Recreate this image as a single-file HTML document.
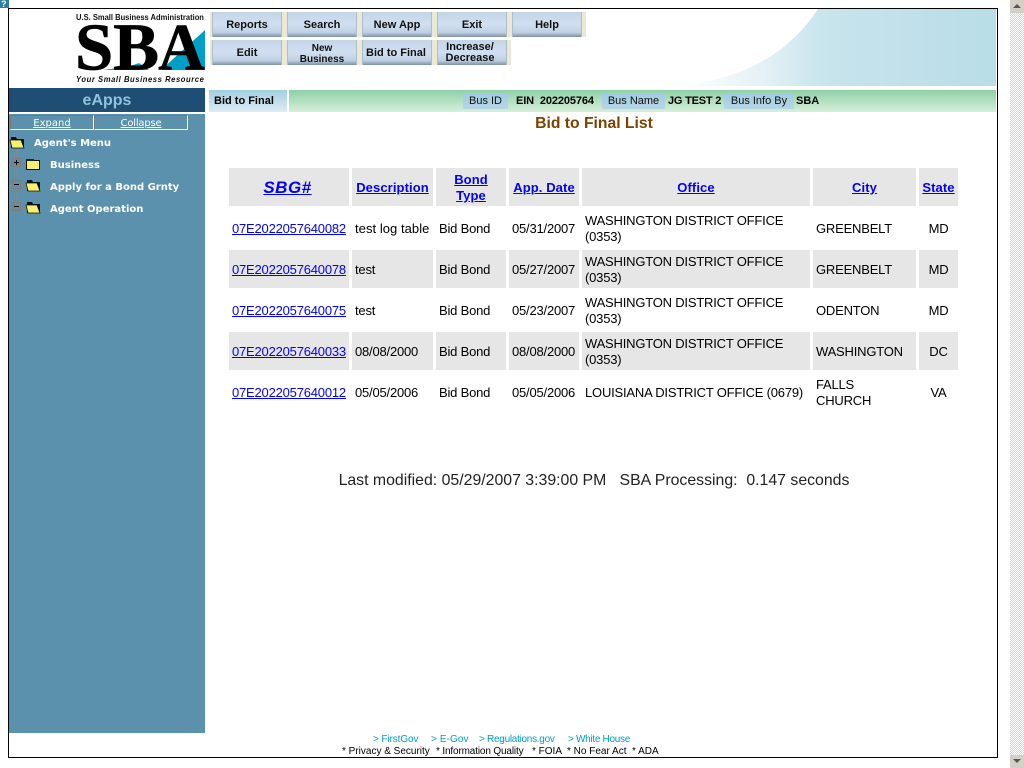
<!DOCTYPE html>
<html><head><meta charset="utf-8"><title>Bid to Final List</title>
<style>
html,body{margin:0;padding:0;width:1024px;height:768px;overflow:hidden;background:#fff;font-family:"Liberation Sans",sans-serif;color:#000}
.a{position:absolute;white-space:nowrap}
a{color:#00f;text-decoration:underline}
#frame{position:absolute;left:8px;top:8px;width:988px;height:748px;border:1px solid #000}
.btn{position:absolute;width:70px;height:25px;padding-top:1px;box-sizing:border-box;background:linear-gradient(#c4d5e8 0%,#d0dff0 50%,#c0d0e4 82%,#7d90a4 100%);box-shadow:inset 1px 0 0 #aebdcd,inset -1px 0 0 #aebdcd,4px 0 0 #ece8d2,-2px 0 0 #ece8d2;text-align:center;font:bold 11px/11px "Liberation Sans",sans-serif;color:#111;display:flex;align-items:center;justify-content:center}
.lb{position:absolute;top:93px;height:16px;background:linear-gradient(#9fcbe0,#b7d6e6);font:11px/17px "Liberation Sans",sans-serif;color:#111;text-align:center}
.val{position:absolute;top:93px;font:bold 11px/17px "Liberation Sans",sans-serif;color:#000;white-space:nowrap}
table{position:absolute;left:226px;top:165px;border-collapse:separate;border-spacing:3px;table-layout:fixed;width:735px;font:13px/16px "Liberation Sans",sans-serif;letter-spacing:-.2px}
td,th{padding:2px 3px 0;height:38px;box-sizing:border-box;overflow:hidden}
th{background:#e6e6e6;text-align:center;font:bold 13px/16px "Liberation Sans",sans-serif;letter-spacing:.1px}
tr.g td{background:#e6e6e6}
td.c{text-align:center}
.m{position:absolute;font:bold 10px/12px "DejaVu Sans",sans-serif;color:#fff;white-space:nowrap}
.foot{position:absolute;white-space:nowrap;font:10px/11px "Liberation Sans",sans-serif}
</style></head><body>
<svg class="a" style="left:0;top:0" width="9" height="8"><rect width="9" height="8" fill="#2c7f9f"/><text x="1" y="7" font-family="Liberation Sans" font-size="9" font-weight="bold" fill="#fff">?</text></svg>
<div id="frame"></div>

<!-- banner graphic -->
<svg class="a" style="left:660px;top:9px" width="337" height="80">
<defs><linearGradient id="bg" x1="0" x2="1" y1="0" y2="0"><stop offset="0" stop-color="#fff"/><stop offset=".28" stop-color="#e2f0f5"/><stop offset=".45" stop-color="#c8e4ed"/><stop offset="1" stop-color="#b9dde7"/></linearGradient></defs>
<path d="M20 77C90 68 130 42 158 0H336V77Z" fill="url(#bg)"/>
</svg>

<!-- logo -->
<div class="a" style="left:76px;top:12px;font:bold 8.5px/11px 'Liberation Sans',sans-serif;color:#111;transform:scaleX(.89);transform-origin:0 0">U.S. Small Business Administration</div>
<svg class="a" style="left:75px;top:24px" width="131" height="48">
<path d="M87 45L130 6V46H87Z" fill="#00a0c6"/>
<path d="M28 46C42 44 54 43 64 39L74 46Z" fill="#00a0c6"/>
<text x="0" y="45.500" font-family="Liberation Serif" font-weight="bold" font-size="67" textLength="84" lengthAdjust="spacingAndGlyphs" fill="#000" stroke="#000" stroke-width=".7">SB</text>
<text x="83" y="45.500" font-family="Liberation Serif" font-weight="bold" font-size="67" textLength="47" lengthAdjust="spacingAndGlyphs" fill="#000" stroke="#000" stroke-width=".4">A</text>
<path d="M97 46L103 40L109 46Z" fill="#00a0c6"/>
</svg>
<div class="a" style="left:76px;top:74px;font:italic bold 8.5px/11px 'Liberation Sans',sans-serif;letter-spacing:.62px;color:#111;transform:scaleX(.9);transform-origin:0 0">Your Small Business Resource</div>

<!-- buttons -->
<div class="btn" style="left:212px;top:12px">Reports</div>
<div class="btn" style="left:287px;top:12px">Search</div>
<div class="btn" style="left:362px;top:12px">New App</div>
<div class="btn" style="left:437px;top:12px">Exit</div>
<div class="btn" style="left:512px;top:12px">Help</div>
<div class="btn" style="left:212px;top:40px">Edit</div>
<div class="btn" style="left:287px;top:40px;font-size:10px;padding-top:3px">New<br>Business</div>
<div class="btn" style="left:362px;top:40px;padding-right:2px">Bid to Final</div>
<div class="btn" style="left:437px;top:40px;padding-right:4px">Increase/<br>Decrease</div>

<!-- sidebar -->
<div class="a" style="left:9px;top:88px;width:196px;height:24px;background:#1f4e74;color:#8fc3dc;font:bold 16px/25px 'Liberation Sans',sans-serif;text-align:center">eApps</div>
<div class="a" style="left:9px;top:112px;width:196px;height:621px;background:#5b91ad"></div>
<div class="a" style="left:9px;top:112px;width:196px;height:2px;background:#fff"></div>
<div class="a" style="left:10px;top:115px;width:82px;height:13px;border:1px solid;border-color:#777 #fff #fff #777;color:#fff;font:10px/15px 'DejaVu Sans',sans-serif;text-align:center;text-decoration:underline">Expand</div>
<div class="a" style="left:94px;top:115px;width:92px;height:13px;border:1px solid;border-color:#777 #fff #fff #777;color:#fff;font:10px/15px 'DejaVu Sans',sans-serif;text-align:center;text-decoration:underline;letter-spacing:-.2px">Collapse</div>

<svg class="a" style="left:0;top:130px" width="60" height="90">
<path d="M16.500 18V78M20 34.500H26M20 56.500H26M20 78.500H26" stroke="#7d8a92" fill="none" stroke-dasharray="1 1"/>
<g transform="translate(9,-1)"><path d="M2 8H7L8 10H15V19H2Z" fill="#111"/><path d="M1 11H12L15 19H3Z" fill="#f6f070" stroke="#111" stroke-width=".8"/></g>
<rect x="12.500" y="28.500" width="8" height="8" fill="#5b91ad" stroke="#7d7d7d"/><path d="M14 32.500H19M16.500 30V35" stroke="#000"/>
<rect x="12.500" y="50.500" width="8" height="8" fill="#5b91ad" stroke="#7d7d7d"/><path d="M14 54.500H19" stroke="#000"/>
<rect x="12.500" y="72.500" width="8" height="8" fill="#5b91ad" stroke="#7d7d7d"/><path d="M14 76.500H19" stroke="#000"/>
<path d="M26.500 30.500H39.500V39.500H26.500Z" fill="#f6f070" stroke="#111"/><path d="M26 29H34V31H26Z" fill="#222"/>
<g transform="translate(25,42)"><path d="M2 8H7L8 10H15V19H2Z" fill="#111"/><path d="M1 11H12L15 19H3Z" fill="#f6f070" stroke="#111" stroke-width=".8"/></g>
<g transform="translate(25,64)"><path d="M2 8H7L8 10H15V19H2Z" fill="#111"/><path d="M1 11H12L15 19H3Z" fill="#f6f070" stroke="#111" stroke-width=".8"/></g>
</svg>
<div class="m" style="left:34px;top:138px">Agent's Menu</div>
<div class="m" style="left:50px;top:160px">Business</div>
<div class="m" style="left:50px;top:182px">Apply for a Bond Grnty</div>
<div class="m" style="left:50px;top:204px">Agent Operation</div>

<!-- status bar -->
<div class="a" style="left:209px;top:90px;width:78px;height:22px;background:linear-gradient(#a3cfe2,#dcecf3);font:bold 11px/23px 'Liberation Sans',sans-serif;text-indent:5px">Bid to Final</div>
<div class="a" style="left:289px;top:90px;width:707px;height:22px;background:linear-gradient(#8ed0a6,#d6efdb)"></div>
<div class="lb" style="left:463px;width:45px">Bus ID</div>
<div class="val" style="left:516px;letter-spacing:-.12px">EIN&nbsp; 202205764</div>
<div class="lb" style="left:602px;width:63px">Bus Name</div>
<div class="val" style="left:668px;letter-spacing:-.2px">JG TEST 2</div>
<div class="lb" style="left:724px;width:70px">Bus Info By</div>
<div class="val" style="left:796px">SBA</div>

<div class="a" style="left:209px;width:770px;top:114px;text-align:center;font:bold 15.700px/19px 'Liberation Sans',sans-serif;color:#7a4300">Bid to Final List</div>

<table>
<colgroup><col style="width:120px"><col style="width:81px"><col style="width:70px"><col style="width:70px"><col style="width:228px"><col style="width:103px"><col style="width:39px"></colgroup>
<tr>
<th style="font:italic bold 17px/16px 'Liberation Sans',sans-serif;letter-spacing:.5px;padding-left:0"><a href="#">SBG#</a></th><th><a href="#">Description</a></th><th><a href="#">Bond<br>Type</a></th><th><a href="#">App. Date</a></th><th><a href="#">Office</a></th><th><a href="#">City</a></th><th><a href="#">State</a></th></tr>
<tr><td><a href="#">07E2022057640082</a></td><td style="letter-spacing:.05px;white-space:nowrap">test log table</td><td>Bid Bond</td><td>05/31/2007</td><td>WASHINGTON DISTRICT OFFICE (0353)</td><td>GREENBELT</td><td class="c">MD</td></tr>
<tr class="g"><td><a href="#">07E2022057640078</a></td><td>test</td><td>Bid Bond</td><td>05/27/2007</td><td>WASHINGTON DISTRICT OFFICE (0353)</td><td>GREENBELT</td><td class="c">MD</td></tr>
<tr><td><a href="#">07E2022057640075</a></td><td>test</td><td>Bid Bond</td><td>05/23/2007</td><td>WASHINGTON DISTRICT OFFICE (0353)</td><td>ODENTON</td><td class="c">MD</td></tr>
<tr class="g"><td><a href="#">07E2022057640033</a></td><td>08/08/2000</td><td>Bid Bond</td><td>08/08/2000</td><td>WASHINGTON DISTRICT OFFICE (0353)</td><td>WASHINGTON</td><td class="c">DC</td></tr>
<tr><td><a href="#">07E2022057640012</a></td><td>05/05/2006</td><td>Bid Bond</td><td>05/05/2006</td><td style="white-space:nowrap">LOUISIANA DISTRICT OFFICE (0679)</td><td>FALLS<br>CHURCH</td><td class="c">VA</td></tr>
</table>

<div class="a" style="left:209px;width:770px;top:471px;text-align:center;font:15.850px/19px 'Liberation Sans',sans-serif;color:#222">Last modified: 05/29/2007 3:39:00 PM&nbsp;&nbsp; SBA Processing:&nbsp; 0.147 seconds</div>

<div class="foot" style="left:373px;top:734px;color:#00a0c0;letter-spacing:-.1px">&gt; FirstGov</div>
<div class="foot" style="left:431px;top:734px;color:#00a0c0;letter-spacing:.1px">&gt; E-Gov</div>
<div class="foot" style="left:479px;top:734px;color:#00a0c0;letter-spacing:-.28px">&gt; Regulations.gov</div>
<div class="foot" style="left:568px;top:734px;color:#00a0c0;letter-spacing:-.3px">&gt; White House</div>
<div class="foot" style="left:342px;top:746px">* Privacy &amp; Security</div>
<div class="foot" style="left:436px;top:746px;letter-spacing:-.15px">* Information Quality</div>
<div class="foot" style="left:532px;top:746px">* FOIA</div>
<div class="foot" style="left:567px;top:746px">* No Fear Act</div>
<div class="foot" style="left:632px;top:746px">* ADA</div>

<!-- scrollbar -->
<div class="a" style="left:1010px;top:0;width:14px;height:768px;background-color:#efebe4;background-image:conic-gradient(#d8d4cc 25%,#fff 0 50%,#d8d4cc 0 75%,#fff 0);background-size:2px 2px"></div>
<div class="a" style="left:1010px;top:0;width:14px;height:13px;background:#d4d0c8"></div>
<div class="a" style="left:1010px;top:755px;width:14px;height:13px;background:#d4d0c8"></div>
<svg class="a" style="left:1010px;top:0" width="14" height="13"><path d="M3 8L7 4L11 8Z" fill="#555"/></svg>
<svg class="a" style="left:1010px;top:755px" width="14" height="13"><path d="M3 4L11 4L7 8Z" fill="#555"/></svg>
</body></html>
